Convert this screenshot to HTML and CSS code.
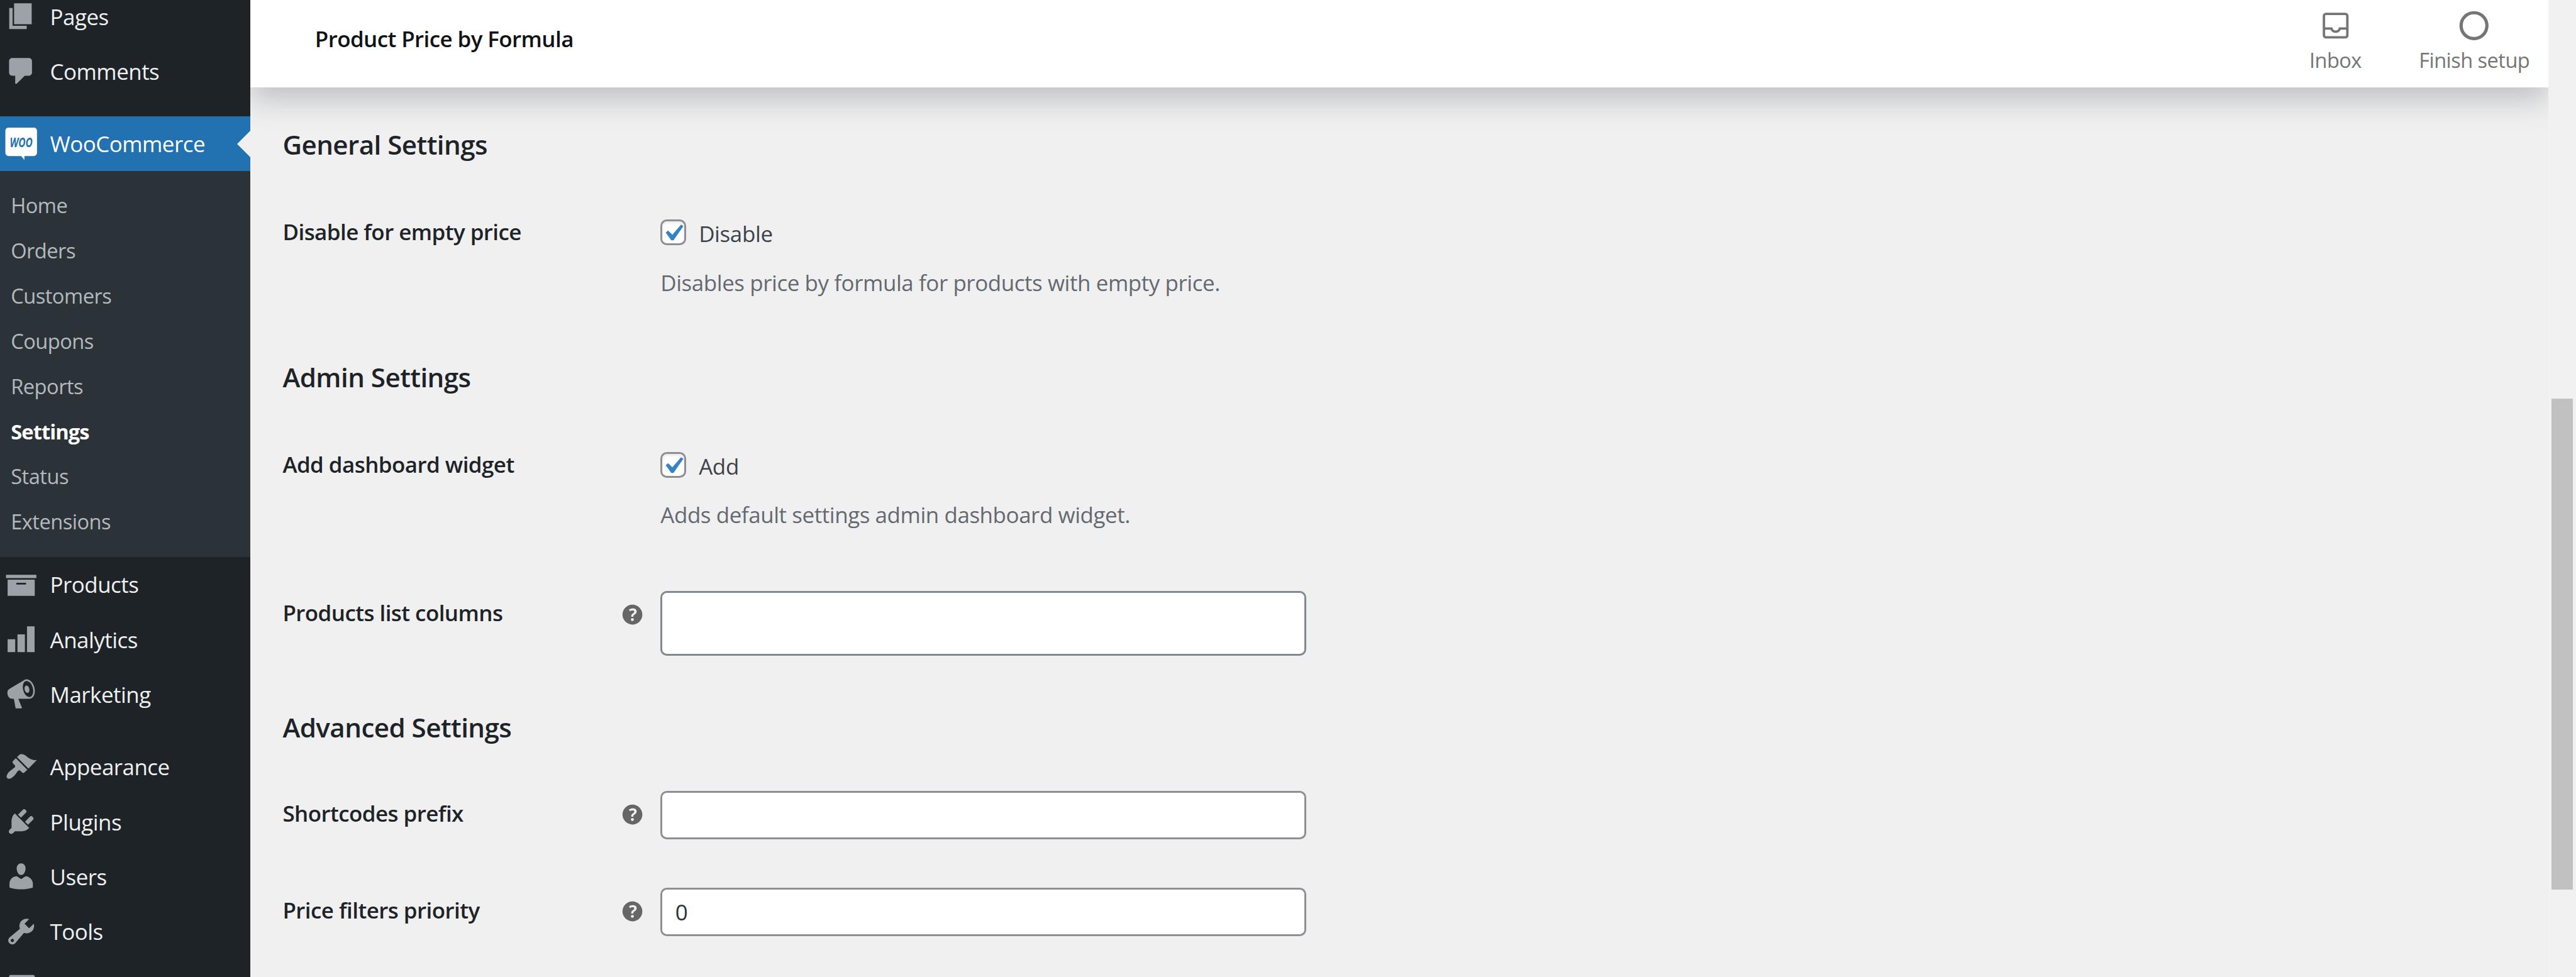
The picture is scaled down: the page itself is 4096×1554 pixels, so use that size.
FILE: index.html
```html
<!DOCTYPE html>
<html lang="en">
<head>
<meta charset="utf-8">
<title>WooCommerce settings</title>
<link rel="stylesheet" href="styles.css">
</head>
<body>
<div class="app">
  <nav class="sidebar">
    <ul class="menu">
      <li class="menu-item menu-item-first"><svg class="menu-icon" viewBox="0 0 20 20"><path d="M5.6 2h10.9v13H5.6zM2.6 5h2.1v11h8.7v2H2.6z"/></svg><span>Pages</span></li>
      <li class="menu-item"><svg class="menu-icon" viewBox="0 0 20 20"><path d="M4.4 2h10.4c1.1 0 1.9.9 1.9 2v7c0 1.100-.8 2-1.900 2h-2.600l-5 5h-.9v-5H4.400c-1.100 0-1.900-.9-1.900-2V4c0-1.100.8-2 1.900-2z"/></svg><span>Comments</span></li>
      <li class="menu-gap"></li>
      <li class="menu-item menu-item-current"><svg class="menu-icon" viewBox="0 0 20 20"><path d="M2.300 0h15.400C19 0 19.800.8 19.800 2.100v13.300c0 1.300-.8 2.200-2.100 2.200H12V20l-2-2.400H2.300C1 17.600.2 16.700.2 15.400V2.100C.2.8 1 0 2.300 0z"/><text class="woo-mark" x="2.900" y="11.900" textLength="14.200" lengthAdjust="spacingAndGlyphs">WOO</text></svg><span>WooCommerce</span></li>
    </ul>
    <ul class="submenu">
      <li>Home</li>
      <li>Orders</li>
      <li>Customers</li>
      <li>Coupons</li>
      <li>Reports</li>
      <li class="submenu-current">Settings</li>
      <li>Status</li>
      <li>Extensions</li>
    </ul>
    <ul class="menu">
      <li class="menu-item"><svg class="menu-icon" viewBox="0 0 20 20"><path d="M19.400 4v2H.6V4h18.800zM1.600 7h16.800v10H1.600V7zm11.400 3V9H7v1h6z"/></svg><span>Products</span></li>
      <li class="menu-item"><svg class="menu-icon" viewBox="0 0 20 20"><path d="M18.300 18V2h-4.700v16h4.700zM12.300 18V7H7.700v11h4.600zM6.300 18v-8H1.600v8h4.700z"/></svg><span>Analytics</span></li>
      <li class="menu-item"><svg class="menu-icon" viewBox="0 0 20 20"><path d="M18.150 5.940c.46 1.620.38 3.220-.02 4.480-.42 1.280-1.260 2.180-2.300 2.480-.16.06-.26.06-.4.06-.06.02-.12.02-.18.02-.06.02-.14.02-.22.02h-6.800l2.220 5.500c.02.14-.06.26-.14.34-.08.1-.24.16-.34.16H6.950c-.1 0-.26-.06-.34-.16-.08-.08-.16-.2-.14-.34l-1-5.500H4.250l-.02-.02c-.5.06-1.080-.18-1.540-.62s-.88-1.080-1.060-1.880c-.24-.8-.2-1.560-.02-2.200.18-.62.58-1.080 1.060-1.300l.02-.02 9-5.400c.1-.06.18-.1.24-.16.06-.04.14-.08.24-.12.16-.08.28-.12.5-.18 1.040-.3 2.240.1 3.220.98s1.840 2.240 2.260 3.860zm-2.580 5.980h-.02c.4-.1.74-.34 1.040-.7.58-.7.86-1.760.86-3.040 0-.64-.1-1.300-.28-1.980-.34-1.360-1.020-2.500-1.780-3.240s-1.680-1.100-2.460-.88c-.82.22-1.400.96-1.700 2-.32 1.040-.28 2.360.06 3.720.38 1.360 1 2.500 1.800 3.240.78.74 1.620 1.100 2.480.88zm-2.540-7.080c.22-.04.42-.02.62.04.38.16.76.48 1.020 1s.42 1.200.42 1.780c0 .3-.04.56-.12.8-.18.48-.44.84-.86.94-.34.1-.8-.06-1.140-.4s-.64-.86-.78-1.500c-.18-.62-.12-1.240.02-1.720s.48-.84.82-.94z"/></svg><span>Marketing</span></li>
      <li class="menu-gap"></li>
      <li class="menu-item"><svg class="menu-icon" viewBox="0 0 20 20"><path d="M14.480 11.060L7.410 3.990l1.500-1.500c.5-.56 2.300-.47 3.510.32 1.210.8 1.430 1.280 2.910 2.100 1.180.64 2.450 1.260 4.450.85zm-.71.71L6.700 4.700 4.930 6.470c-.39.39-.39 1.020 0 1.410l1.060 1.060c.39.39.39 1.030 0 1.420-.6.6-1.430 1.110-2.210 1.690-.35.26-.7.53-1.010.84C1.430 14.230.4 16.080 1.400 17.070c.99 1 2.840-.03 4.180-1.360.31-.31.58-.66.85-1.020.57-.78 1.080-1.610 1.690-2.210.39-.39 1.020-.39 1.410 0l1.060 1.060c.39.39 1.020.39 1.410 0z"/></svg><span>Appearance</span></li>
      <li class="menu-item"><svg class="menu-icon" viewBox="0 0 20 20"><path d="M13.110 4.360L9.870 7.600 8 5.730l3.240-3.240c.35-.34 1.050-.2 1.560.32.52.51.66 1.210.31 1.550zm-8 1.770l.91-1.120 9.010 9.010-1.190.84c-.71.71-2.630 1.160-3.820 1.160H6.140L4.900 17.260c-.59.59-1.540.59-2.120 0-.59-.58-.59-1.530 0-2.120l1.240-1.240v-3.880c0-1.130.4-3.190 1.090-3.890zm7.260 3.970l3.240-3.240c.34-.35 1.040-.21 1.550.31.52.51.66 1.210.31 1.550l-3.240 3.250z"/></svg><span>Plugins</span></li>
      <li class="menu-item"><svg class="menu-icon" viewBox="0 0 20 20"><path d="M10 9.250c-2.270 0-2.730-3.440-2.730-3.440C7 4.020 7.820 2 9.970 2c2.160 0 2.980 2.020 2.710 3.810 0 0-.41 3.440-2.680 3.440zm0 2.570L12.720 10c2.390 0 4.520 2.330 4.520 4.530v2.490s-3.650 1.130-7.240 1.130c-3.650 0-7.240-1.130-7.240-1.130v-2.490c0-2.250 1.940-4.480 4.470-4.480z"/></svg><span>Users</span></li>
      <li class="menu-item"><svg class="menu-icon" viewBox="0 0 20 20"><path d="M16.680 9.770c-1.340 1.340-3.300 1.670-4.950.99l-5.410 6.520c-.99.99-2.590.99-3.580 0s-.99-2.590 0-3.570l6.520-5.420c-.68-1.650-.35-3.610.99-4.950 1.280-1.280 3.120-1.620 4.720-1.060l-2.890 2.890 2.820 2.820 2.860-2.870c.53 1.580.18 3.390-1.080 4.650zM3.810 16.210c.4.39 1.040.39 1.430 0 .4-.4.4-1.040 0-1.430-.39-.4-1.030-.4-1.430 0-.39.39-.39 1.030 0 1.430z"/></svg><span>Tools</span></li>
      <li class="menu-item"><svg class="menu-icon" viewBox="0 0 20 20"><path d="M3.400 3h14.100c.5 0 .9.450.9 1v12c0 .550-.4 1-.9 1H3.400c-.5 0-.9-.450-.9-1V4c0-.550.4-1 .9-1z"/></svg></li>
    </ul>
  </nav>

  <div class="page">
    <header class="topbar">
      <h1 class="topbar-title">Product Price by Formula</h1>
      <div class="tabs">
        <div class="tab tab-inbox">
          <svg class="tab-icon" viewBox="0 0 24 24"><path fill-rule="evenodd" d="M6 5.500h12a.5.5 0 01.5.5v7H14a2 2 0 11-4 0H5.500V6a.5.5 0 01.5-.5zm-.5 9V18a.5.5 0 00.5.5h12a.5.5 0 00.5-.5v-3.500h-3.337a3.500 3.500 0 01-6.326 0H5.500zM4 13V6a2 2 0 012-2h12a2 2 0 012 2v12a2 2 0 01-2 2H6a2 2 0 01-2-2v-5z"/></svg>
          <span>Inbox</span>
        </div>
        <div class="tab tab-setup">
          <svg class="tab-icon" viewBox="0 0 24 24"><circle class="tab-ring" cx="12" cy="12" r="8"/></svg>
          <span>Finish setup</span>
        </div>
      </div>
    </header>

    <main class="settings">
      <section class="group">
        <h2 class="group-title">General Settings</h2>
        <div class="field">
          <div class="field-label"><span>Disable for empty price</span></div>
          <div class="field-value">
            <label class="check"><span class="check-box"><svg class="check-mark" viewBox="0 0 20 20"><path d="M14.830 4.890l1.340.94-5.810 8.380H9.020L5.780 9.670l1.340-1.250 2.570 2.400z"/></svg></span><span class="check-text">Disable</span></label>
            <p class="description">Disables price by formula for products with empty price.</p>
          </div>
        </div>
      </section>

      <section class="group">
        <h2 class="group-title">Admin Settings</h2>
        <div class="field">
          <div class="field-label"><span>Add dashboard widget</span></div>
          <div class="field-value">
            <label class="check"><span class="check-box"><svg class="check-mark" viewBox="0 0 20 20"><path d="M14.830 4.890l1.340.94-5.810 8.380H9.020L5.780 9.670l1.340-1.250 2.570 2.400z"/></svg></span><span class="check-text">Add</span></label>
            <p class="description">Adds default settings admin dashboard widget.</p>
          </div>
        </div>
        <div class="field field-columns">
          <div class="field-label"><span>Products list columns</span>
            <svg class="help" viewBox="0 0 20 20"><path d="M17 10c0-3.870-3.140-7-7-7-3.870 0-7 3.130-7 7s3.130 7 7 7c3.860 0 7-3.130 7-7zm-6.300 1.480H9.140v-.43c0-.38.08-.7.24-.98s.46-.57.88-.89c.41-.29.68-.53.81-.71.14-.18.2-.39.2-.62 0-.25-.09-.44-.28-.58-.19-.13-.45-.19-.79-.19-.58 0-1.250.19-2 .57l-.64-1.280c.87-.49 1.800-.74 2.770-.74.81 0 1.450.2 1.920.58.48.39.71.91.71 1.550 0 .43-.09.8-.29 1.110-.19.32-.57.67-1.110 1.060-.38.28-.61.49-.71.63-.1.15-.15.34-.15.57v.35zm-1.470 2.740c-.18-.17-.27-.42-.27-.73 0-.33.08-.58.26-.75s.43-.25.77-.25c.32 0 .57.09.75.26s.27.42.27.74c0 .3-.09.55-.27.72-.18.18-.43.27-.75.27-.33 0-.58-.09-.76-.26z"/></svg>
          </div>
          <div class="field-value"><div class="box box-columns"></div></div>
        </div>
      </section>

      <section class="group group-advanced">
        <h2 class="group-title">Advanced Settings</h2>
        <div class="field field-input">
          <div class="field-label"><span>Shortcodes prefix</span>
            <svg class="help" viewBox="0 0 20 20"><path d="M17 10c0-3.870-3.140-7-7-7-3.870 0-7 3.130-7 7s3.130 7 7 7c3.860 0 7-3.130 7-7zm-6.300 1.480H9.140v-.43c0-.38.08-.7.24-.98s.46-.57.88-.89c.41-.29.68-.53.81-.71.14-.18.2-.39.2-.62 0-.25-.09-.44-.28-.58-.19-.13-.45-.19-.79-.19-.58 0-1.250.19-2 .57l-.64-1.280c.87-.49 1.800-.74 2.770-.74.81 0 1.450.2 1.920.58.48.39.71.91.71 1.550 0 .43-.09.8-.29 1.110-.19.32-.57.67-1.110 1.060-.38.28-.61.49-.71.63-.1.15-.15.34-.15.57v.35zm-1.470 2.740c-.18-.17-.27-.42-.27-.73 0-.33.08-.58.26-.75s.43-.25.77-.25c.32 0 .57.09.75.26s.27.42.27.74c0 .3-.09.55-.27.72-.18.18-.43.27-.75.27-.33 0-.58-.09-.76-.26z"/></svg>
          </div>
          <div class="field-value"><div class="box"></div></div>
        </div>
        <div class="field field-input">
          <div class="field-label"><span>Price filters priority</span>
            <svg class="help" viewBox="0 0 20 20"><path d="M17 10c0-3.870-3.140-7-7-7-3.870 0-7 3.130-7 7s3.130 7 7 7c3.860 0 7-3.130 7-7zm-6.300 1.480H9.140v-.43c0-.38.08-.7.24-.98s.46-.57.88-.89c.41-.29.68-.53.81-.71.14-.18.2-.39.2-.62 0-.25-.09-.44-.28-.58-.19-.13-.45-.19-.79-.19-.58 0-1.250.19-2 .57l-.64-1.280c.87-.49 1.800-.74 2.770-.74.81 0 1.450.2 1.920.58.48.39.71.91.71 1.550 0 .43-.09.8-.29 1.110-.19.32-.57.67-1.110 1.060-.38.28-.61.49-.71.63-.1.15-.15.34-.15.57v.35zm-1.470 2.740c-.18-.17-.27-.42-.27-.73 0-.33.08-.58.26-.75s.43-.25.77-.25c.32 0 .57.09.75.26s.27.42.27.74c0 .3-.09.55-.27.72-.18.18-.43.27-.75.27-.33 0-.58-.09-.76-.26z"/></svg>
          </div>
          <div class="field-value"><div class="box">0</div></div>
        </div>
      </section>
    </main>
  </div>

  <div class="scrollbar"><div class="scrollbar-thumb"></div></div>
</div>
</body>
</html>
```
FILE: styles.css
```css
/* 1rem is ten layout pixels of the 1595px-wide admin screen */
html { font-size: 25.68px; }

* { box-sizing: border-box; margin: 0; padding: 0; }

body {
  font-family: "Open Sans", "Noto Sans", sans-serif;
  font-size: 1.36rem;
  background: #f0f0f0;
  overflow: hidden;
}

ul { list-style: none; }
svg { display: block; flex: none; }

.app { display: flex; width: 100vw; height: 100vh; overflow: hidden; }

/* sidebar */
.sidebar {
  flex: none;
  width: 15.5rem;
  height: 100%;
  overflow: hidden;
  background: #1d2327;
}

.menu-item {
  display: flex;
  height: 3.4rem;
  padding: .7rem 0 0 .3rem;
  gap: .8rem;
  color: #f0f0f1;
  line-height: 1.8rem;
  letter-spacing: -.02rem;
}
.menu-item span { padding-top: .14rem; }
.menu-item-first { margin-top: -.7rem; }
.menu-gap { height: 1.1rem; }
.menu-icon { width: 2rem; height: 2rem; fill: #9ca2a7; }

.menu-item-current { position: relative; background: #2271b1; color: #fff; }
.menu-item-current .menu-icon { fill: #fff; }
.menu-item-current::after {
  content: "";
  position: absolute;
  right: 0;
  top: .9rem;
  border: .85rem solid transparent;
  border-left-width: 0;
  border-right-color: #f0f0f0;
}
.menu-icon .woo-mark {
  fill: #2271b1;
  font: italic 700 8.6px "Open Sans", sans-serif;
  letter-spacing: 0;
}

.submenu { padding: .75rem 0 .75rem; background: #2c3338; }
.submenu li {
  padding: .5rem .67rem;
  color: #b3b9be;
  font-size: 1.27rem;
  line-height: 1.8rem;
  letter-spacing: -.02rem;
}
.submenu .submenu-current { color: #fff; font-weight: 700; letter-spacing: -.035rem; }

/* page */
.page { flex: 1; min-width: 0; overflow: hidden; }

.topbar {
  display: flex;
  align-items: stretch;
  justify-content: space-between;
  height: 5.4rem;
  padding-left: 4rem;
  background: #fff;
  box-shadow: 0 .8rem 1.6rem 0 rgba(85, 93, 102, .3);
}
.topbar-title {
  padding-top: 1.4rem;
  color: #101214;
  font-size: 1.36rem;
  font-weight: 600;
  line-height: 2rem;
  letter-spacing: -.022rem;
}
.tabs { display: flex; }
.tab {
  display: flex;
  flex-direction: column;
  align-items: center;
  gap: .14rem;
  padding-top: .4rem;
  color: #757575;
  font-size: 1.27rem;
  line-height: 1.6rem;
  letter-spacing: -.022rem;
}
.tab-inbox { width: 8rem; }
.tab-setup { width: 9.2rem; }
.tab-icon { width: 2.4rem; height: 2.4rem; fill: #757575; }
.tab-ring { fill: none; stroke: #757575; stroke-width: 2; }

.settings { padding: 2.34rem 2rem 0; }
.group { padding-bottom: 1.5rem; }
.group-title {
  margin-bottom: 1.3rem;
  color: #1d2327;
  font-size: 1.64rem;
  font-weight: 600;
  line-height: 2.4rem;
  letter-spacing: -.021rem;
}
.field { display: flex; height: 9.2rem; padding-top: 2rem; }
.field-label {
  display: flex;
  justify-content: space-between;
  width: 23.4rem;
  padding-right: .88rem;
  color: #1d2327;
  font-weight: 600;
  line-height: 1.82rem;
  letter-spacing: -.021rem;
}
.field-label span { padding-top: .05rem; }
.help { width: 1.76rem; height: 1.76rem; margin-top: .15rem; fill: #666; }

.check {
  display: flex;
  gap: .77rem;
  padding-top: .12rem;
  color: #3c434a;
  line-height: 1.82rem;
  letter-spacing: -.0135rem;
}
.check-text { padding-top: .05rem; }
.check-box {
  flex: none;
  width: 1.6rem;
  height: 1.6rem;
  margin-top: .04rem;
  border: 3px solid #8c8f94;
  border-radius: .4rem;
  background: #fff;
  box-shadow: inset 0 .1rem .2rem rgba(0, 0, 0, .1);
}
.check-mark { width: 2.1rem; height: 2.1rem; margin: -.32rem 0 0 -.42rem; fill: #3582c4; }
.description {
  padding-top: 1.18rem;
  color: #646970;
  line-height: 1.82rem;
  letter-spacing: -.016rem;
}

.field-columns { height: 7.3rem; }
.field-columns .field-value { margin-top: -.44rem; }
.group-advanced .group-title { margin-bottom: 1.2rem; }
.field-input { height: 6rem; }
.field-input .field-value { margin-top: -.45rem; }

.box {
  display: flex;
  align-items: center;
  width: 40rem;
  height: 3rem;
  padding: 0 .8rem;
  border: 3px solid #8c8f94;
  border-radius: .4rem;
  background: #fff;
  color: #2c3338;
}
.box-columns { height: 4rem; border-color: #7e8993; }

/* window scrollbar */
.scrollbar { position: relative; flex: none; width: 1.7rem; padding: 24.7rem .2rem 0; background: #f1f1f1; }
.scrollbar-thumb { height: 30.4rem; background: #c1c1c1; }
```
